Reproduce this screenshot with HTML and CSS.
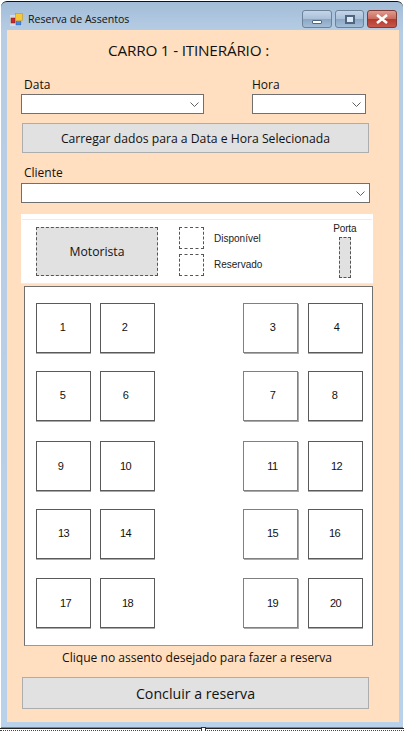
FILE: index.html
```html
<!DOCTYPE html>
<html lang="pt">
<head>
  <meta charset="UTF-8">
  <title>Reserva de Assentos</title>
  <link rel="stylesheet" href="styles.css">
</head>
<body>
  <div class="window">
    <div class="titlebar">
      <svg class="app-icon" width="16" height="16" viewBox="0 0 16 16">
        <rect x="1" y="4" width="12" height="11" fill="#d5dae0"/>
        <rect x="2" y="7" width="4" height="5" fill="#c8282a" stroke="#7a1c1c" stroke-width="0.5"/>
        <rect x="6.5" y="2.5" width="7" height="7" fill="#f5c83a" stroke="#b98c1a" stroke-width="0.5"/>
        <rect x="7" y="10.5" width="5" height="3.5" fill="#4a86d8" stroke="#2c5a9e" stroke-width="0.5"/>
      </svg>
      <span class="window-title">Reserva de Assentos</span>
      <div class="window-buttons">
        <div class="win-btn win-min"><span class="glyph-min"></span></div>
        <div class="win-btn win-max"><span class="glyph-max"></span></div>
        <div class="win-btn win-close">
          <svg width="14" height="10" viewBox="0 0 14 10"><path d="M2 1 L12 9 M12 1 L2 9" stroke="#fff" stroke-width="2.6"/></svg>
        </div>
      </div>
    </div>

    <div class="content">
      <h1 class="heading">CARRO 1 - ITINERÁRIO :</h1>

      <div class="date-row">
        <div class="field field-data">
          <label class="field-label">Data</label>
          <div class="combo">
            <svg width="9" height="5" viewBox="0 0 9 5"><path d="M0.5 0.5 L4.5 4.5 L8.5 0.5" fill="none" stroke="#606060"/></svg>
          </div>
        </div>
        <div class="field field-hora">
          <label class="field-label">Hora</label>
          <div class="combo">
            <svg width="9" height="5" viewBox="0 0 9 5"><path d="M0.5 0.5 L4.5 4.5 L8.5 0.5" fill="none" stroke="#606060"/></svg>
          </div>
        </div>
      </div>

      <button class="btn btn-load">Carregar dados para a Data e Hora Selecionada</button>

      <div class="field field-cliente">
        <label class="field-label">Cliente</label>
        <div class="combo">
          <svg width="9" height="5" viewBox="0 0 9 5"><path d="M0.5 0.5 L4.5 4.5 L8.5 0.5" fill="none" stroke="#606060"/></svg>
        </div>
      </div>

      <div class="legend">
        <div class="driver">Motorista</div>
        <div class="legend-keys">
          <div class="key"><span class="key-box"></span><span class="key-text">Disponível</span></div>
          <div class="key"><span class="key-box"></span><span class="key-text">Reservado</span></div>
        </div>
        <div class="door-wrap">
          <span class="door-label">Porta</span>
          <div class="door"></div>
        </div>
      </div>

      <div class="seats">
        <div class="seat-row">
          <div class="seat left-1">1</div><div class="seat left-3">2</div>
          <div class="seat seat-aisle right-2">3</div><div class="seat seat-last right-1">4</div>
        </div>
        <div class="seat-row">
          <div class="seat left-1">5</div><div class="seat left-2">6</div>
          <div class="seat seat-aisle right-2">7</div><div class="seat seat-last left-1">8</div>
        </div>
        <div class="seat-row">
          <div class="seat left-3">9</div><div class="seat left-2">10</div>
          <div class="seat seat-aisle right-2">11</div><div class="seat seat-last right-1">12</div>
        </div>
        <div class="seat-row">
          <div class="seat">13</div><div class="seat left-2">14</div>
          <div class="seat seat-aisle right-2">15</div><div class="seat seat-last left-1">16</div>
        </div>
        <div class="seat-row">
          <div class="seat right-2">17</div><div class="seat">18</div>
          <div class="seat seat-aisle right-2">19</div><div class="seat seat-last">20</div>
        </div>
      </div>

      <p class="hint">Clique no assento desejado para fazer a reserva</p>

      <button class="btn btn-finish">Concluir a reserva</button>
    </div>
  </div>
  <div class="resize-strip"><span class="resize-handle"></span></div>
</body>
</html>
```

FILE: styles.css
```css
html, body {
  margin: 0;
  padding: 0;
  background: #fff;
  overflow: hidden;
}
body {
  font-family: "Open Sans", "Noto Sans", sans-serif;
  color: #111;
  height: 731px;
}
.window {
  box-sizing: border-box;
  height: 727px;
  margin: 1px 1px 0 1px;
  padding: 0 4px 5px 6px;
  background: linear-gradient(180deg, #a3bdd8 0, #b6cde4 30px, #b9d1ea 100%);
  border-top: 1px solid #111;
  border-bottom: 1px solid #12b0d0;
  border-radius: 6px 6px 0 0;
}
.titlebar {
  box-sizing: border-box;
  display: flex;
  align-items: center;
  height: 28px;
  padding-top: 6px;
}
.app-icon {
  margin: 0 3px 0 2px;
}
.window-title {
  font-size: 10.6px;
  color: #111;
}
.window-buttons {
  display: flex;
  gap: 3px;
  margin-left: auto;
  margin-right: 2px;
}
.win-btn {
  box-sizing: border-box;
  display: flex;
  align-items: center;
  justify-content: center;
  width: 30px;
  height: 18px;
  border: 1px solid #6d8199;
  border-radius: 3px;
  background: linear-gradient(180deg, #c4d5e7 0, #a9c0d9 50%, #8ba7c5 52%, #a4bdd7 100%);
}
.win-max {
  width: 29px;
}
.win-close {
  border-color: #7e3a35;
  background: linear-gradient(180deg, #dd9c8f 0, #c9695c 50%, #b63a2d 52%, #c4584a 100%);
}
.glyph-min {
  width: 10px;
  height: 4px;
  margin-top: 5px;
  background: #fff;
  border: 1px solid #4f6680;
  box-sizing: border-box;
  border-radius: 1px;
}
.glyph-max {
  width: 10px;
  height: 9px;
  background: #dfe9f3;
  border: 2px solid #4f6680;
  box-sizing: border-box;
}
.content {
  box-sizing: border-box;
  height: 692px;
  background: #ffdfbf;
  padding: 0 0 0 14px;
}
.heading {
  margin: 0;
  height: 43px;
  padding-bottom: 3px;
  box-sizing: border-box;
  line-height: 40px;
  width: 335px;
  text-align: center;
  font-size: 15.3px;
  font-weight: 400;
  letter-spacing: -0.2px;
}
.date-row {
  display: flex;
  height: 41px;
}
.field {
  display: flex;
  flex-direction: column;
}
.field-data {
  width: 183px;
}
.field-hora {
  width: 114px;
  margin-left: 48px;
}
.field-label {
  height: 21px;
  line-height: 24px;
  padding-left: 3px;
  font-size: 12px;
}
.field-hora .field-label {
  padding-left: 0;
}
.field-cliente .field-label {
  height: 20px;
  line-height: 20px;
}
.combo {
  box-sizing: border-box;
  display: flex;
  align-items: center;
  justify-content: flex-end;
  height: 20px;
  padding-right: 4px;
  background: #fff;
  border: 1px solid #707070;
}
.btn {
  display: block;
  box-sizing: border-box;
  width: 347px;
  margin: 0;
  margin-left: 1px;
  padding: 0;
  background: #e1e1e1;
  border: 1px solid #adadad;
  color: #111;
  font-family: "Open Sans", "Noto Sans", sans-serif;
}
.btn-load {
  height: 30px;
  margin-top: 9px;
  font-size: 12.2px;
}
.field-cliente {
  width: 349px;
  margin-top: 10px;
}
.legend {
  box-sizing: border-box;
  display: flex;
  width: 352px;
  height: 70px;
  margin-top: 11px;
  padding: 13px 0 0 15px;
  background: #fff;
  border-bottom: 1px solid #ececec;
  position: relative;
}
.legend::before {
  content: "";
  position: absolute;
  left: 1px;
  right: 1px;
  top: 5px;
  height: 1px;
  background: #ececec;
}
.driver {
  box-sizing: border-box;
  width: 122px;
  height: 49px;
  line-height: 48px;
  text-align: center;
  font-size: 12.2px;
  background: #e1e1e1;
  border: 1px dashed #555;
}
.legend-keys {
  display: flex;
  flex-direction: column;
  gap: 5px;
  margin-left: 21px;
}
.key {
  display: flex;
  align-items: center;
}
.key-box {
  box-sizing: border-box;
  width: 25px;
  height: 22px;
  border: 1px dashed #555;
}
.key-text {
  margin-left: 10px;
  font-family: "Liberation Sans", Arial, sans-serif;
  font-size: 10px;
  color: #222;
}
.key + .key .key-text {
  margin-top: -2px;
}
.door-wrap {
  display: flex;
  flex-direction: column;
  align-items: center;
  margin-left: 71px;
  margin-top: -5px;
}
.door-label {
  height: 15px;
  line-height: 13px;
  font-family: "Liberation Sans", Arial, sans-serif;
  font-size: 10px;
  letter-spacing: -0.2px;
  color: #222;
}
.door {
  box-sizing: border-box;
  width: 12px;
  height: 41px;
  background: #e1e1e1;
  border: 1px dashed #555;
}
.seats {
  box-sizing: border-box;
  width: 349px;
  height: 360px;
  margin-top: 2px;
  margin-left: 3px;
  padding: 16px 9px 0 11px;
  background: #fff;
  border: 1px solid #707070;
  border-bottom-color: #999;
}
.seat-row {
  display: flex;
  margin-bottom: 18px;
}
.seat-row:nth-child(2) {
  margin-bottom: 20px;
}
.seat-row:nth-child(4) {
  margin-bottom: 19px;
}
.seat {
  box-sizing: border-box;
  width: 55px;
  height: 50px;
  line-height: 47px;
  text-align: center;
  background: #fff;
  border: 1px solid #5a5a5a;
  box-shadow: 0 1px 0 #aaa;
  font-family: "Liberation Sans", Arial, sans-serif;
  font-size: 11px;
  letter-spacing: -0.5px;
  color: #111;
}
.seat-row:nth-child(3) .seat,
.seat-row:nth-child(5) .seat {
  line-height: 48px;
}
.seat-row:nth-child(4) .seat {
  line-height: 46px;
}
.seat + .seat {
  margin-left: 9px;
}
.seat-row .seat-aisle {
  margin-left: 88px;
  border-color: #808080;
  box-shadow: 1px 1px 0 #aaa;
}
.seat-row .seat-last {
  margin-left: 10px;
}
.left-1 { padding-right: 2px; }
.left-2 { padding-right: 4px; }
.left-3 { padding-right: 6px; }
.right-1 { padding-left: 2px; }
.right-2 { padding-left: 4px; }
.hint {
  width: 352px;
  margin: 0;
  height: 30px;
  line-height: 24px;
  text-align: center;
  font-size: 12.1px;
}
.btn-finish {
  height: 32px;
  margin-top: 1px;
  font-size: 14.2px;
}
.resize-strip {
  position: relative;
  box-sizing: border-box;
  height: 3px;
  border-top: 1px solid #222;
  border-bottom: 1px dotted #444;
}
.resize-handle {
  position: absolute;
  left: 201px;
  top: -2px;
  width: 5px;
  height: 5px;
  background: #fff;
  border: 1px solid #333;
  border-bottom: 0;
  box-sizing: border-box;
}
```
